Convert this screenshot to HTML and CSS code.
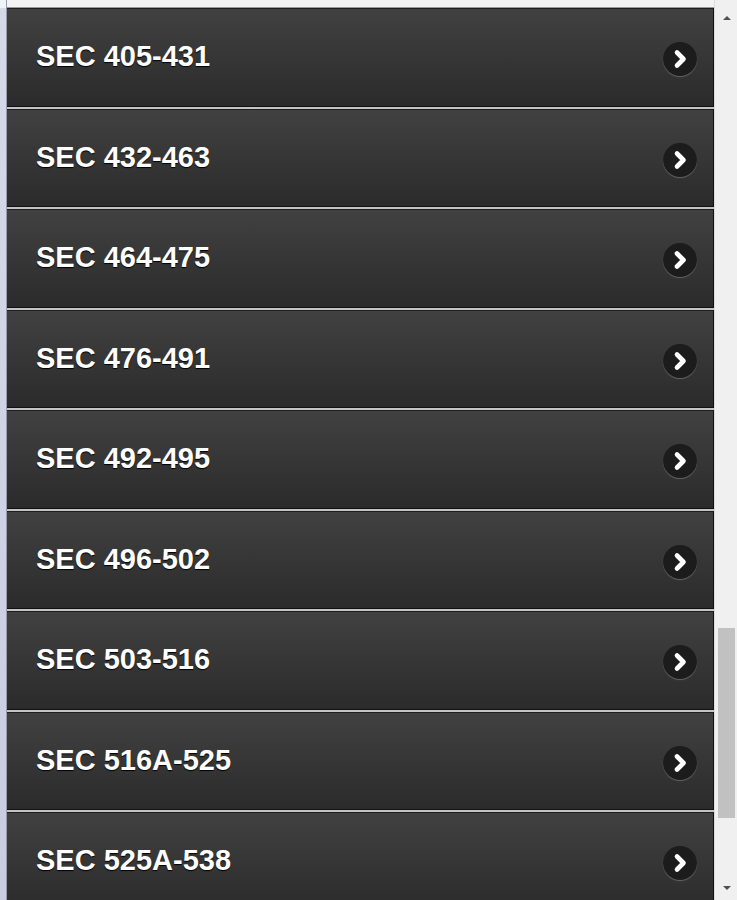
FILE: index.html
```html
<!DOCTYPE html>
<html>
<head>
<meta charset="utf-8">
<link rel="stylesheet" href="styles.css">
</head>
<body>
<div class="frame">
  <div class="side"></div>
  <div class="main">
    <ul class="list">
      <li class="item"><span class="label">SEC 405-431</span><span class="arrow"><svg viewBox="0 0 34 34" width="34" height="34"><path d="M14 10.5 L20.5 17 L14 23.5" fill="none" stroke="#fff" stroke-width="4.6" stroke-linecap="round" stroke-linejoin="round"/></svg></span></li>
      <li class="item"><span class="label">SEC 432-463</span><span class="arrow"><svg viewBox="0 0 34 34" width="34" height="34"><path d="M14 10.5 L20.5 17 L14 23.5" fill="none" stroke="#fff" stroke-width="4.6" stroke-linecap="round" stroke-linejoin="round"/></svg></span></li>
      <li class="item"><span class="label">SEC 464-475</span><span class="arrow"><svg viewBox="0 0 34 34" width="34" height="34"><path d="M14 10.5 L20.5 17 L14 23.5" fill="none" stroke="#fff" stroke-width="4.6" stroke-linecap="round" stroke-linejoin="round"/></svg></span></li>
      <li class="item"><span class="label">SEC 476-491</span><span class="arrow"><svg viewBox="0 0 34 34" width="34" height="34"><path d="M14 10.5 L20.5 17 L14 23.5" fill="none" stroke="#fff" stroke-width="4.6" stroke-linecap="round" stroke-linejoin="round"/></svg></span></li>
      <li class="item"><span class="label">SEC 492-495</span><span class="arrow"><svg viewBox="0 0 34 34" width="34" height="34"><path d="M14 10.5 L20.5 17 L14 23.5" fill="none" stroke="#fff" stroke-width="4.6" stroke-linecap="round" stroke-linejoin="round"/></svg></span></li>
      <li class="item"><span class="label">SEC 496-502</span><span class="arrow"><svg viewBox="0 0 34 34" width="34" height="34"><path d="M14 10.5 L20.5 17 L14 23.5" fill="none" stroke="#fff" stroke-width="4.6" stroke-linecap="round" stroke-linejoin="round"/></svg></span></li>
      <li class="item"><span class="label">SEC 503-516</span><span class="arrow"><svg viewBox="0 0 34 34" width="34" height="34"><path d="M14 10.5 L20.5 17 L14 23.5" fill="none" stroke="#fff" stroke-width="4.6" stroke-linecap="round" stroke-linejoin="round"/></svg></span></li>
      <li class="item"><span class="label">SEC 516A-525</span><span class="arrow"><svg viewBox="0 0 34 34" width="34" height="34"><path d="M14 10.5 L20.5 17 L14 23.5" fill="none" stroke="#fff" stroke-width="4.6" stroke-linecap="round" stroke-linejoin="round"/></svg></span></li>
      <li class="item"><span class="label">SEC 525A-538</span><span class="arrow"><svg viewBox="0 0 34 34" width="34" height="34"><path d="M14 10.5 L20.5 17 L14 23.5" fill="none" stroke="#fff" stroke-width="4.6" stroke-linecap="round" stroke-linejoin="round"/></svg></span></li>
    </ul>
  </div>
  <div class="scrollbar">
    <div class="sb-btn"><span class="tri-up"></span></div>
    <div class="sb-track"><div class="sb-thumb"></div></div>
    <div class="sb-btn"><span class="tri-down"></span></div>
  </div>
</div>
</body>
</html>
```
FILE: styles.css
```css
html, body {
  margin: 0;
  padding: 0;
  background: #ffffff;
}
.frame {
  display: flex;
  height: 900px;
  overflow: hidden;
}
.side {
  width: 6px;
  flex: none;
  background: linear-gradient(#f2f3f8 0, #f2f3f8 8px, #d6d9e8 8px, #c9cde0 100%);
  border-right: 1px solid #9a9cab;
}
.main {
  flex: none;
  width: 707px;
  background: #f3f3f3;
  padding-top: 7px;
  border-right: 1px solid #dcdcdc;
}
.list {
  list-style: none;
  margin: 0;
  padding: 0;
  display: flex;
  flex-direction: column;
  gap: 2px;
  background: #c4c4c4;
  border-top: 1px solid #9a9a9a;
}
.item {
  height: 96.5px;
  display: flex;
  align-items: center;
  justify-content: space-between;
  padding: 0 16px 0 29px;
  border-top: 1px solid #1e1e1e;
  border-bottom: 1px solid #111;
  border-right: 1px solid #111;
  background: linear-gradient(#414141, #2b2b2b);
}
.label {
  font-family: "Liberation Sans", Arial, sans-serif;
  font-weight: bold;
  font-size: 29px;
  color: #ffffff;
  text-shadow: 0 1px 1px #000;
  margin-top: -1px;
}
.arrow {
  width: 34px;
  height: 34px;
  margin-top: 4px;
  border-radius: 50%;
  background: #1c1c1c;
  box-shadow: 0 1px 1px rgba(255,255,255,0.25);
  display: flex;
  align-items: center;
  justify-content: center;
}
.arrow svg {
  display: block;
}
.scrollbar {
  flex: 1;
  display: flex;
  flex-direction: column;
  background: #f0f0f0;
  padding-left: 1px;
}
.sb-btn {
  height: 17px;
  display: flex;
  align-items: center;
  justify-content: center;
}
.tri-up {
  width: 0;
  height: 0;
  border-left: 4px solid transparent;
  border-right: 4px solid transparent;
  border-bottom: 4px solid #505050;
  margin-top: 18px;
}
.tri-down {
  width: 0;
  height: 0;
  border-left: 4px solid transparent;
  border-right: 4px solid transparent;
  border-top: 4px solid #505050;
  margin-bottom: 8px;
}
.sb-track {
  flex: 1;
  padding: 0 2px;
  display: flex;
  flex-direction: column;
}
.sb-thumb {
  margin-top: 611px;
  height: 190px;
  background: #c1c1c1;
}
```
